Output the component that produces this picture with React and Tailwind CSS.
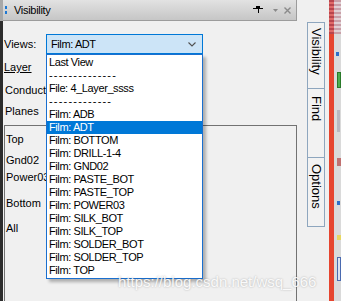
const listItems = [
  { t: "Last View" },
  { t: "--------------", dash: true },
  { t: "File: 4_Layer_ssss" },
  { t: "-------------", dash: true },
  { t: "Film: ADB" },
  { t: "Film: ADT", sel: true },
  { t: "Film: BOTTOM" },
  { t: "Film: DRILL-1-4" },
  { t: "Film: GND02" },
  { t: "Film: PASTE_BOT" },
  { t: "Film: PASTE_TOP" },
  { t: "Film: POWER03" },
  { t: "Film: SILK_BOT" },
  { t: "Film: SILK_TOP" },
  { t: "Film: SOLDER_BOT" },
  { t: "Film: SOLDER_TOP" },
  { t: "Film: TOP" },
];

export default function App() {
  return (
    <div className="relative flex h-[301px] w-[341px] overflow-hidden bg-[#f0f0f0] font-['Liberation_Sans',Arial,sans-serif] text-[11px] text-black">
      {/* left dark strip */}
      <div className="flex w-[3px] flex-col">
        <div className="h-[21px] bg-[#a8a8a8]" />
        <div className="flex-1 bg-[#2c2c2c]" />
      </div>

      {/* main panel */}
      <div className="relative flex w-[294px] flex-col">
        {/* title bar */}
        <div className="flex h-[21px] items-center border-b border-r border-[#9c9c9c] bg-gradient-to-b from-[#e2e2e2] to-[#c6c6c6] pl-[2px] pr-[5px]">
          <div className="flex flex-col gap-[2px]">
            <div className="h-[3px] w-[2px] bg-[#1e78d2]" />
            <div className="h-[3px] w-[2px] bg-[#1e78d2]" />
          </div>
          <span className="ml-[7px] leading-[13px] tracking-[-0.3px]">Visibility</span>
          <svg className="ml-auto" width="10" height="8" viewBox="0 0 10 8">
            <rect x="3" y="0" width="4" height="2" fill="#000" />
            <rect x="0" y="2" width="10" height="1" fill="#000" />
            <rect x="5" y="3" width="1" height="4" fill="#000" />
          </svg>
          <svg className="ml-[10px]" width="5" height="3" viewBox="0 0 5 3">
            <path d="M0 0H5L2.5 3Z" fill="#8a8a8a" />
          </svg>
          <svg className="ml-[6px]" width="7" height="7" viewBox="0 0 7 7">
            <path d="M0.5 0.5L6.5 6.5M6.5 0.5L0.5 6.5" stroke="#8a8a8a" strokeWidth="1.4" />
          </svg>
        </div>

        {/* Views row */}
        <div className="mt-[13px] flex h-[20px] items-center">
          <div className="w-[43px] pl-[1px] leading-[13px]">Views:</div>
          <div className="flex h-[20px] w-[157px] items-center border border-[#0078d7] bg-[#cce4f7] pl-[4px] pr-[6px]">
            <span className="leading-[13px] tracking-[-0.4px]">Film: ADT</span>
            <svg className="ml-auto" width="8" height="5" viewBox="0 0 8 5">
              <path d="M0.5 0.5L4 4L7.5 0.5" fill="none" stroke="#505050" strokeWidth="1.1" />
            </svg>
          </div>
        </div>

        <div className="mt-[7px] h-[13px] pl-[1px] leading-[13px] underline underline-offset-[1px]">Layer</div>
        <div className="mt-[10px] h-[13px] w-[43px] overflow-hidden whitespace-nowrap pl-[2px] leading-[13px]">Conductors</div>
        <div className="mt-[8px] h-[13px] pl-[2px] leading-[13px]">Planes</div>

        {/* group box */}
        <div className="ml-[1px] mt-[7px] flex flex-1 flex-col border border-b-0 border-[#727272] pl-[1px] pt-[7px]">
          <div className="h-[13px] leading-[13px]">Top</div>
          <div className="mt-[8px] h-[13px] leading-[13px]">Gnd02</div>
          <div className="mt-[4px] h-[13px] w-[40px] overflow-hidden whitespace-nowrap leading-[13px]">Power03</div>
          <div className="mt-[13px] h-[13px] leading-[13px]">Bottom</div>
          <div className="mt-[12px] h-[13px] leading-[13px]">All</div>
        </div>

        {/* dropdown list */}
        <div className="absolute left-[43px] top-[54px] w-[157px] border border-[#1a6fcf] bg-white py-[1px] shadow-[3px_3px_3px_rgba(0,0,0,0.28)]">
          {listItems.map((it, i) => (
            <div
              key={i}
              className={
                it.sel
                  ? "h-[13px] whitespace-nowrap bg-[#0078d7] pl-[2px] leading-[13px] tracking-[-0.4px] text-white"
                  : it.dash
                  ? "h-[13px] whitespace-nowrap pl-[2px] leading-[13px] tracking-[1.2px]"
                  : "h-[13px] whitespace-nowrap pl-[2px] leading-[13px] tracking-[-0.4px]"
              }
            >
              {it.t}
            </div>
          ))}
        </div>
      </div>

      {/* side tabs */}
      <div className="ml-[10px] flex w-[18px] flex-col pt-[22px]">
        <div className="flex h-[67px] justify-center border border-[#8ea6be] bg-[#f2f2f2] pt-[5px]">
          <span className="text-[13px] leading-[16px] [writing-mode:vertical-rl]">Visibility</span>
        </div>
        <div className="flex h-[69px] justify-center border border-t-0 border-[#8ea6be] bg-[#f2f2f2] pt-[7px]">
          <span className="text-[13px] leading-[16px] [writing-mode:vertical-rl]">Find</span>
        </div>
        <div className="flex h-[69px] justify-center border border-t-0 border-[#8ea6be] bg-[#f2f2f2] pt-[6px]">
          <span className="text-[13px] leading-[16px] [writing-mode:vertical-rl]">Options</span>
        </div>
      </div>

      {/* red strip */}
      <div className="ml-[4px] flex w-[5px] flex-col bg-[#e6452f]">
        <div className="h-[34px] bg-[repeating-linear-gradient(to_bottom,#b8454c_0px,#b8454c_2px,#e06a68_2px,#e06a68_4px)]" />
      </div>

      {/* neighbouring window sliver */}
      <div className="flex flex-1 flex-col bg-[#dadada]">
        <div className="h-[34px] bg-[repeating-linear-gradient(to_bottom,#c9a0a8_0px,#c9a0a8_2px,#e0d0d4_2px,#e0d0d4_4px)]" />
        <div className="ml-[2px] mt-[18px] h-[4px] w-[3px] bg-[#2f6fc8]" />
        <div className="ml-[3px] mt-[16px] h-[16px] w-[4px] border border-[#2a7a2a] bg-[#4caf50]" />
        <div className="ml-[3px] mt-[22px] h-[22px] w-[3px] bg-[#b8b8c0]" />
        <div className="ml-[3px] mt-[26px] h-[8px] w-[4px] bg-[#c07070]" />
        <div className="ml-[3px] mt-[35px] h-[4px] w-[3px] bg-[#2f6fc8]" />
        <div className="ml-[3px] mt-[30px] h-[5px] w-[4px] bg-[#e8d860]" />
        <div className="ml-[3px] mt-[17px] h-[24px] w-[4px] border border-[#4a6ab0] bg-[#dde4f0]" />
      </div>

      {/* watermark */}
      <div className="pointer-events-none absolute left-[118px] top-[274px] whitespace-nowrap text-[15px] leading-[15px] text-white/90 [text-shadow:0_0_2px_rgba(0,0,0,0.3)]">
        https://blog.csdn.net/wsq_666
      </div>
    </div>
  );
}
